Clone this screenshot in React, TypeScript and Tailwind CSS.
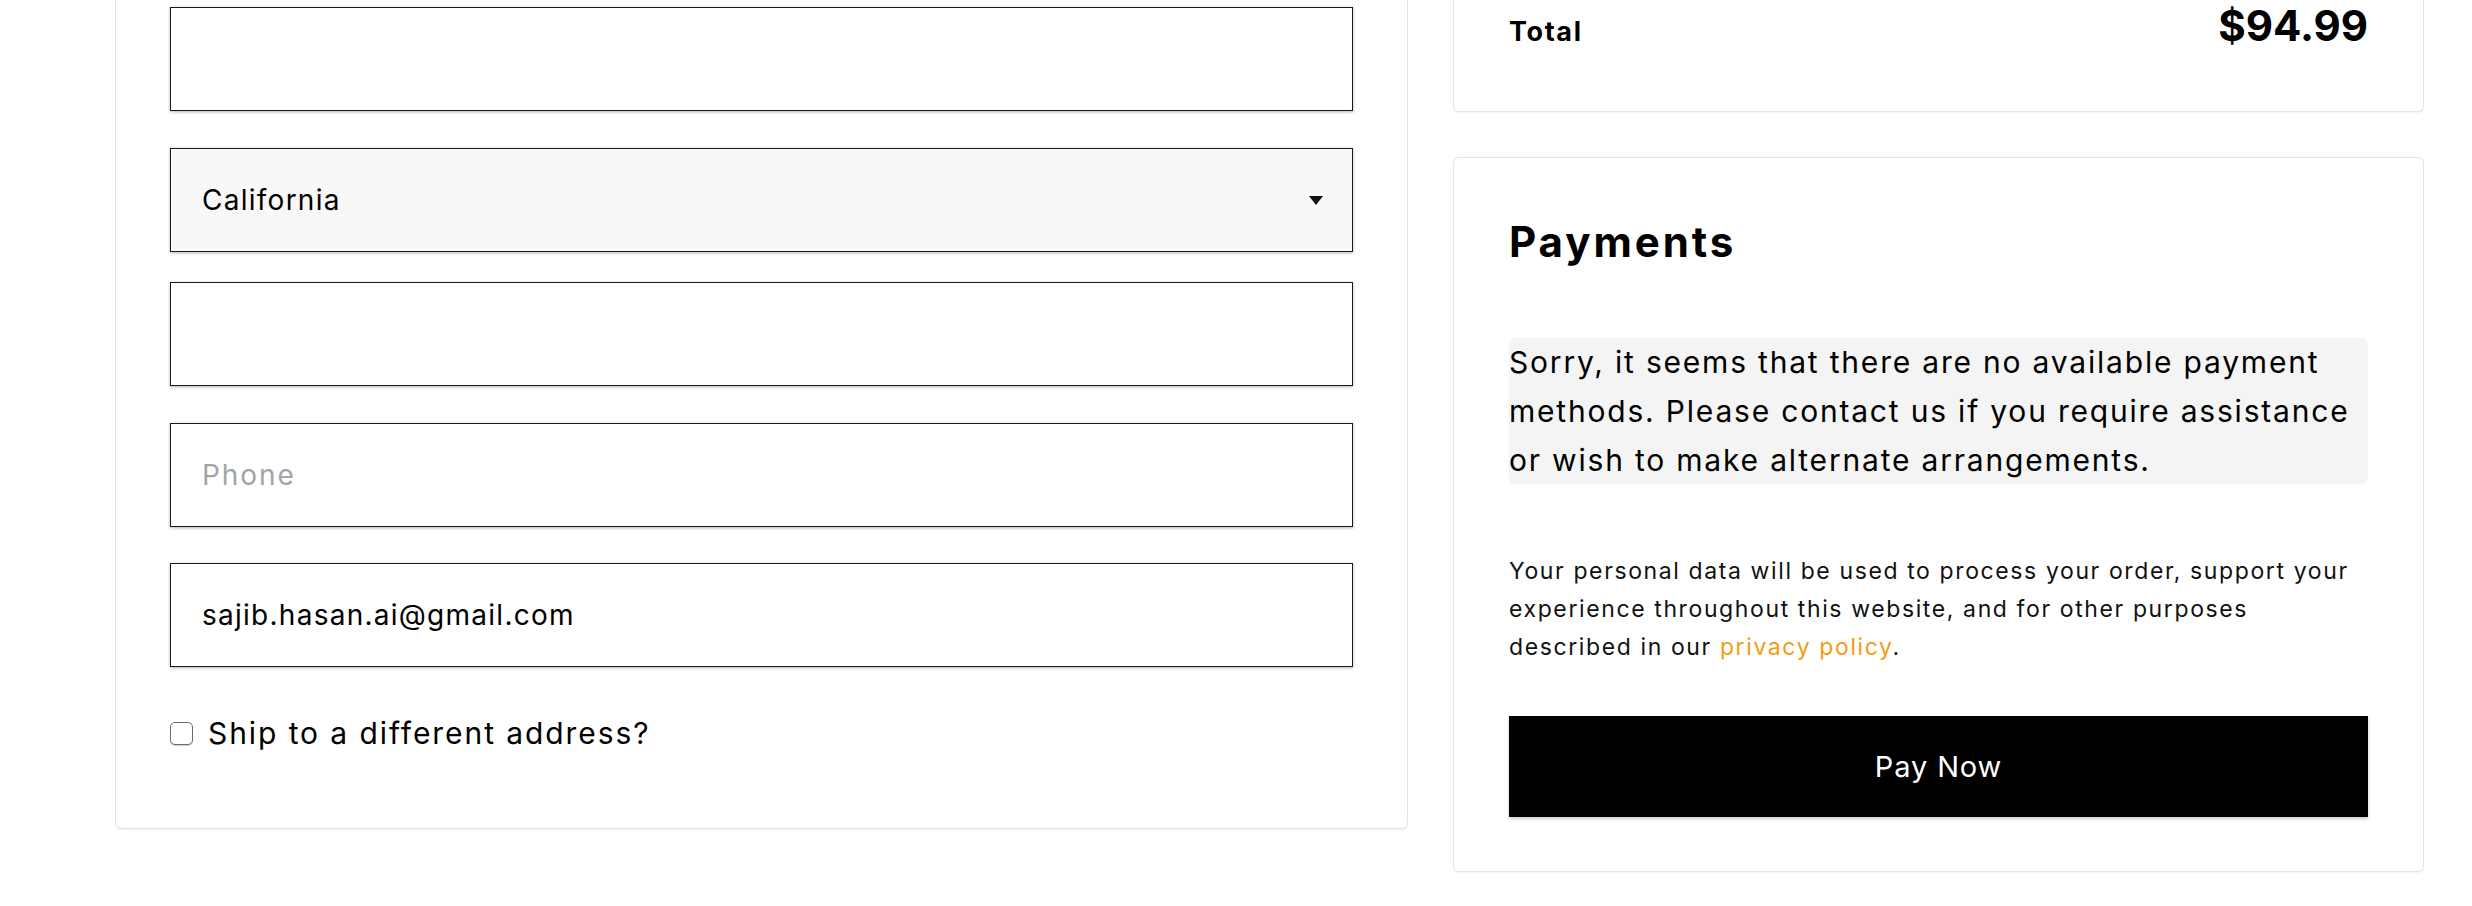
import React from "react";

const font = { fontFamily: "Inter, 'Open Sans', sans-serif" };

function Field({ className = "", children }: { className?: string; children?: React.ReactNode }) {
  return (
    <div
      className={`h-[104px] w-full border border-[#1a1a1a] shadow-[0_1px_3px_rgba(0,0,0,0.3)] flex items-center pl-[31px] pr-[29px] text-[28px] tracking-[0.045em] text-black ${className}`}
    >
      {children}
    </div>
  );
}

export default function App() {
  return (
    <div className="w-[2472px] h-[906px] bg-white overflow-hidden flex items-start pl-[115px] pr-[48px] gap-[45px] text-black" style={font}>
      {/* Left card */}
      <div className="w-[1293px] shrink-0 border border-t-0 border-[#e4e4e4] rounded-b-[6px] shadow-[0_1px_2px_rgba(0,0,0,0.06)] px-[54px] pt-[7px] pb-[72px]">
        <Field />
        <Field className="mt-[37px] bg-[#f7f8f7] justify-between">
          <span>California</span>
          <svg width="14" height="9" viewBox="0 0 14 9">
            <path d="M0 0 L14 0 L7 9 Z" fill="#111" />
          </svg>
        </Field>
        <Field className="mt-[30px]" />
        <Field className="mt-[37px]">
          <span className="text-[#a0a4aa] tracking-[0.07em]">Phone</span>
        </Field>
        <Field className="mt-[36px]">
          <span>sajib.hasan.ai@gmail.com</span>
        </Field>
        <div className="mt-[43px] h-[46px] flex items-center">
          <span className="w-[23px] h-[23px] rounded-[5px] border-[1.5px] border-[#6b6b6b] bg-white shadow-[0_1px_1px_rgba(0,0,0,0.2)] shrink-0" />
          <span className="ml-[15px] text-[30px] leading-none tracking-[0.064em]">Ship to a different address?</span>
        </div>
      </div>

      {/* Right column */}
      <div className="w-[971px] shrink-0 flex flex-col gap-[45px]">
        <div className="h-[112px] border border-t-0 border-[#e4e4e4] rounded-b-[6px] shadow-[0_1px_2px_rgba(0,0,0,0.06)] px-[55px] pt-[5px]">
          <div className="flex justify-between items-baseline">
            <span className="text-[27px] font-bold tracking-[0.06em]">Total</span>
            <span className="text-[42px] leading-none font-bold tracking-[0px]">$94.99</span>
          </div>
        </div>

        <div className="border border-[#e4e4e4] rounded-[6px] shadow-[0_1px_2px_rgba(0,0,0,0.06)] px-[55px] pt-[59px] pb-[54px]">
          <h2 className="text-[42px] leading-[50px] font-bold tracking-[0.07em]">Payments</h2>
          <p className="mt-[71px] bg-[#f4f4f4] rounded-[6px] text-[30px] leading-[49px] h-[146px] tracking-[0.06em] whitespace-nowrap">
            Sorry, it seems that there are no available payment
            <br />
            methods. Please contact us if you require assistance
            <br />
            or wish to make alternate arrangements.
          </p>
          <p className="mt-[68px] text-[23px] leading-[38px] text-[#111] tracking-[0.07em] whitespace-nowrap">
            Your personal data will be used to process your order, support your
            <br />
            experience throughout this website, and for other purposes
            <br />
            described in our <span className="text-[#f39c12]">privacy policy</span>.
          </p>
          <button className="mt-[50px] w-full h-[101px] bg-black text-white text-[29px] tracking-[0.03em] shadow-[0_2px_3px_rgba(0,0,0,0.2)]">
            Pay Now
          </button>
        </div>
      </div>
    </div>
  );
}
